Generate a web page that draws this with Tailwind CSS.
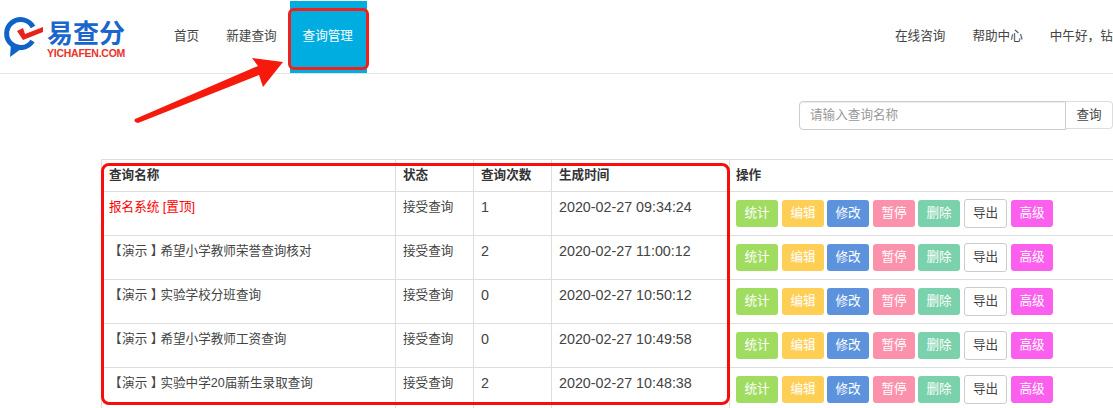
<!DOCTYPE html>
<html><head><meta charset="utf-8"><script src="https://cdn.jsdelivr.net/npm/@tailwindcss/browser@4"></script></head>
<body class="bg-white">
<div class="relative w-[1113px] h-[408px] overflow-hidden bg-white text-[12.6px] leading-[18px] text-[#444] font-['Liberation_Sans','Noto_Sans_CJK_SC',sans-serif]">
  <header class="h-[74px] border-b border-[#e4e4e4] flex items-stretch">
    <div class="w-[161px] shrink-0 relative">
      <svg class="absolute left-0 top-0" width="50" height="60" viewBox="0 0 50 60">
        <path d="M33 27 A14 14 0 1 0 32.5 41" fill="none" stroke="#0f62c8" stroke-width="5"/>
        <path d="M11 44 L10 57 L21 49 Z" fill="#0f62c8"/>
        <path d="M17 31 L23 28 L25 34 L43 27 L43 32 L23 40 Z" fill="#e8231c"/>
      </svg>
      <span class="absolute left-[47px] top-[19px] text-[26px] leading-[30px] font-bold text-[#1a66cc]">易查分</span>
      <span class="absolute left-[47px] top-[47px] text-[10.5px] leading-[12px] font-bold tracking-[-0.25px] text-[#e8332b]">YICHAFEN.COM</span>
    </div>
    <nav class="flex items-stretch mt-[1px]">
      <a class="px-[13px] pt-[26px]">首页</a>
      <a class="px-[13px] pt-[26px] ml-[1px]">新建查询</a>
      <a class="w-[77px] pl-[13px] pt-[26px] bg-[#00ade0] text-white">查询管理</a>
    </nav>
    <div class="ml-auto flex items-stretch gap-[27px] pt-[27px] whitespace-nowrap w-[218px] overflow-hidden shrink-0">
      <a>在线咨询</a><a>帮助中心</a><a>中午好，钻石会员</a>
    </div>
  </header>

  <div class="flex justify-end mt-[27px] h-[30px]">
    <div class="w-[267px] h-[29px] border border-[#ccc] rounded-l-[4px] px-[10px] leading-[27px] text-[#999] shadow-[inset_0_1px_1px_rgba(0,0,0,0.075)]">请输入查询名称</div>
    <div class="w-[47px] h-[28px] border border-l-0 border-[#ddd] rounded-r-[4px] text-center leading-[26px]">查询</div>
  </div>

  <table class="absolute left-[101px] top-[159px] w-[1030px] table-fixed border-collapse">
    <colgroup><col class="w-[294px]"><col class="w-[78px]"><col class="w-[78px]"><col class="w-[178px]"><col></colgroup>
    <thead>
      <tr class="h-[32px] border-y border-[#ddd] font-bold text-[#333] text-left align-top">
        <th class="pl-[7px] pt-[6px] border-r border-l border-[#ddd]">查询名称</th>
        <th class="pl-[7px] pt-[6px] border-r border-[#ddd]">状态</th>
        <th class="pl-[7px] pt-[6px] border-r border-[#ddd]">查询次数</th>
        <th class="pl-[7px] pt-[6px] border-r border-[#ddd]">生成时间</th>
        <th class="pl-[6px] pt-[6px]">操作</th>
      </tr>
    </thead>
    <tbody class="align-top">
      <tr class="h-[44px] border-b border-[#ddd]">
        <td class="pl-[7px] pt-[6px] border-x border-[#ddd] text-[#f00]">报名系统 [置顶]</td>
        <td class="pl-[7px] pt-[6px] border-r border-[#ddd]">接受查询</td>
        <td class="pl-[7px] pt-[6px] border-r border-[#ddd] text-[14.3px]">1</td>
        <td class="pl-[7px] pt-[6px] border-r border-[#ddd] text-[14.3px]">2020-02-27 09:34:24</td>
        <td class="pl-[6px] pt-[8px]">
          <div class="flex text-white text-center leading-[27px]">
            <span class="w-[42px] h-[27px] rounded-[3px] bg-[#a0dc5f]">统计</span><span class="ml-[4px] w-[42px] h-[27px] rounded-[3px] bg-[#ffce54]">编辑</span><span class="ml-[3px] w-[42px] h-[27px] rounded-[3px] bg-[#5d93dc]">修改</span><span class="ml-[4px] w-[42px] h-[27px] rounded-[3px] bg-[#fc91ac]">暂停</span><span class="ml-[3px] w-[42px] h-[27px] rounded-[3px] bg-[#7bd1ab]">删除</span><span class="ml-[4px] -mt-[1px] w-[43px] h-[29px] rounded-[3px] border border-[#ccc] text-[#444] bg-white">导出</span><span class="ml-[4px] w-[42px] h-[27px] rounded-[3px] bg-[#fb5fee]">高级</span>
          </div>
        </td>
      </tr>
      <tr class="h-[44px] border-b border-[#ddd]">
        <td class="pl-[7px] pt-[6px] border-x border-[#ddd]"><span class="tracking-[-3px]">【</span> 演示 <span class="tracking-[-3px]">】</span>希望小学教师荣誉查询核对</td>
        <td class="pl-[7px] pt-[6px] border-r border-[#ddd]">接受查询</td>
        <td class="pl-[7px] pt-[6px] border-r border-[#ddd] text-[14.3px]">2</td>
        <td class="pl-[7px] pt-[6px] border-r border-[#ddd] text-[14.3px]">2020-02-27 11:00:12</td>
        <td class="pl-[6px] pt-[8px]">
          <div class="flex text-white text-center leading-[27px]">
            <span class="w-[42px] h-[27px] rounded-[3px] bg-[#a0dc5f]">统计</span><span class="ml-[4px] w-[42px] h-[27px] rounded-[3px] bg-[#ffce54]">编辑</span><span class="ml-[3px] w-[42px] h-[27px] rounded-[3px] bg-[#5d93dc]">修改</span><span class="ml-[4px] w-[42px] h-[27px] rounded-[3px] bg-[#fc91ac]">暂停</span><span class="ml-[3px] w-[42px] h-[27px] rounded-[3px] bg-[#7bd1ab]">删除</span><span class="ml-[4px] -mt-[1px] w-[43px] h-[29px] rounded-[3px] border border-[#ccc] text-[#444] bg-white">导出</span><span class="ml-[4px] w-[42px] h-[27px] rounded-[3px] bg-[#fb5fee]">高级</span>
          </div>
        </td>
      </tr>
      <tr class="h-[44px] border-b border-[#ddd]">
        <td class="pl-[7px] pt-[6px] border-x border-[#ddd]"><span class="tracking-[-3px]">【</span> 演示 <span class="tracking-[-3px]">】</span>实验学校分班查询</td>
        <td class="pl-[7px] pt-[6px] border-r border-[#ddd]">接受查询</td>
        <td class="pl-[7px] pt-[6px] border-r border-[#ddd] text-[14.3px]">0</td>
        <td class="pl-[7px] pt-[6px] border-r border-[#ddd] text-[14.3px]">2020-02-27 10:50:12</td>
        <td class="pl-[6px] pt-[8px]">
          <div class="flex text-white text-center leading-[27px]">
            <span class="w-[42px] h-[27px] rounded-[3px] bg-[#a0dc5f]">统计</span><span class="ml-[4px] w-[42px] h-[27px] rounded-[3px] bg-[#ffce54]">编辑</span><span class="ml-[3px] w-[42px] h-[27px] rounded-[3px] bg-[#5d93dc]">修改</span><span class="ml-[4px] w-[42px] h-[27px] rounded-[3px] bg-[#fc91ac]">暂停</span><span class="ml-[3px] w-[42px] h-[27px] rounded-[3px] bg-[#7bd1ab]">删除</span><span class="ml-[4px] -mt-[1px] w-[43px] h-[29px] rounded-[3px] border border-[#ccc] text-[#444] bg-white">导出</span><span class="ml-[4px] w-[42px] h-[27px] rounded-[3px] bg-[#fb5fee]">高级</span>
          </div>
        </td>
      </tr>
      <tr class="h-[44px] border-b border-[#ddd]">
        <td class="pl-[7px] pt-[6px] border-x border-[#ddd]"><span class="tracking-[-3px]">【</span> 演示 <span class="tracking-[-3px]">】</span>希望小学教师工资查询</td>
        <td class="pl-[7px] pt-[6px] border-r border-[#ddd]">接受查询</td>
        <td class="pl-[7px] pt-[6px] border-r border-[#ddd] text-[14.3px]">0</td>
        <td class="pl-[7px] pt-[6px] border-r border-[#ddd] text-[14.3px]">2020-02-27 10:49:58</td>
        <td class="pl-[6px] pt-[8px]">
          <div class="flex text-white text-center leading-[27px]">
            <span class="w-[42px] h-[27px] rounded-[3px] bg-[#a0dc5f]">统计</span><span class="ml-[4px] w-[42px] h-[27px] rounded-[3px] bg-[#ffce54]">编辑</span><span class="ml-[3px] w-[42px] h-[27px] rounded-[3px] bg-[#5d93dc]">修改</span><span class="ml-[4px] w-[42px] h-[27px] rounded-[3px] bg-[#fc91ac]">暂停</span><span class="ml-[3px] w-[42px] h-[27px] rounded-[3px] bg-[#7bd1ab]">删除</span><span class="ml-[4px] -mt-[1px] w-[43px] h-[29px] rounded-[3px] border border-[#ccc] text-[#444] bg-white">导出</span><span class="ml-[4px] w-[42px] h-[27px] rounded-[3px] bg-[#fb5fee]">高级</span>
          </div>
        </td>
      </tr>
      <tr class="h-[44px] border-b border-[#ddd]">
        <td class="pl-[7px] pt-[6px] border-x border-[#ddd]"><span class="tracking-[-3px]">【</span> 演示 <span class="tracking-[-3px]">】</span>实验中学20届新生录取查询</td>
        <td class="pl-[7px] pt-[6px] border-r border-[#ddd]">接受查询</td>
        <td class="pl-[7px] pt-[6px] border-r border-[#ddd] text-[14.3px]">2</td>
        <td class="pl-[7px] pt-[6px] border-r border-[#ddd] text-[14.3px]">2020-02-27 10:48:38</td>
        <td class="pl-[6px] pt-[8px]">
          <div class="flex text-white text-center leading-[27px]">
            <span class="w-[42px] h-[27px] rounded-[3px] bg-[#a0dc5f]">统计</span><span class="ml-[4px] w-[42px] h-[27px] rounded-[3px] bg-[#ffce54]">编辑</span><span class="ml-[3px] w-[42px] h-[27px] rounded-[3px] bg-[#5d93dc]">修改</span><span class="ml-[4px] w-[42px] h-[27px] rounded-[3px] bg-[#fc91ac]">暂停</span><span class="ml-[3px] w-[42px] h-[27px] rounded-[3px] bg-[#7bd1ab]">删除</span><span class="ml-[4px] -mt-[1px] w-[43px] h-[29px] rounded-[3px] border border-[#ccc] text-[#444] bg-white">导出</span><span class="ml-[4px] w-[42px] h-[27px] rounded-[3px] bg-[#fb5fee]">高级</span>
          </div>
        </td>
      </tr>
    </tbody>
  </table>

  <div class="absolute left-[288px] top-[8px] w-[81px] h-[62px] border-[3px] border-[#f0201c] rounded-[6px]"></div>
  <div class="absolute left-[101px] top-[163px] w-[629px] h-[242px] border-[3px] border-[#f80d0d] rounded-[8px]"></div>
  <svg class="absolute left-0 top-0" width="300" height="130" viewBox="0 0 300 130">
    <path d="M135 119 L258 66 L252 58 L283 62 L263 87 L259 75 L138 123 Q133 122 135 119 Z" fill="#f61a0c"/>
  </svg>
</div>
</body></html>
